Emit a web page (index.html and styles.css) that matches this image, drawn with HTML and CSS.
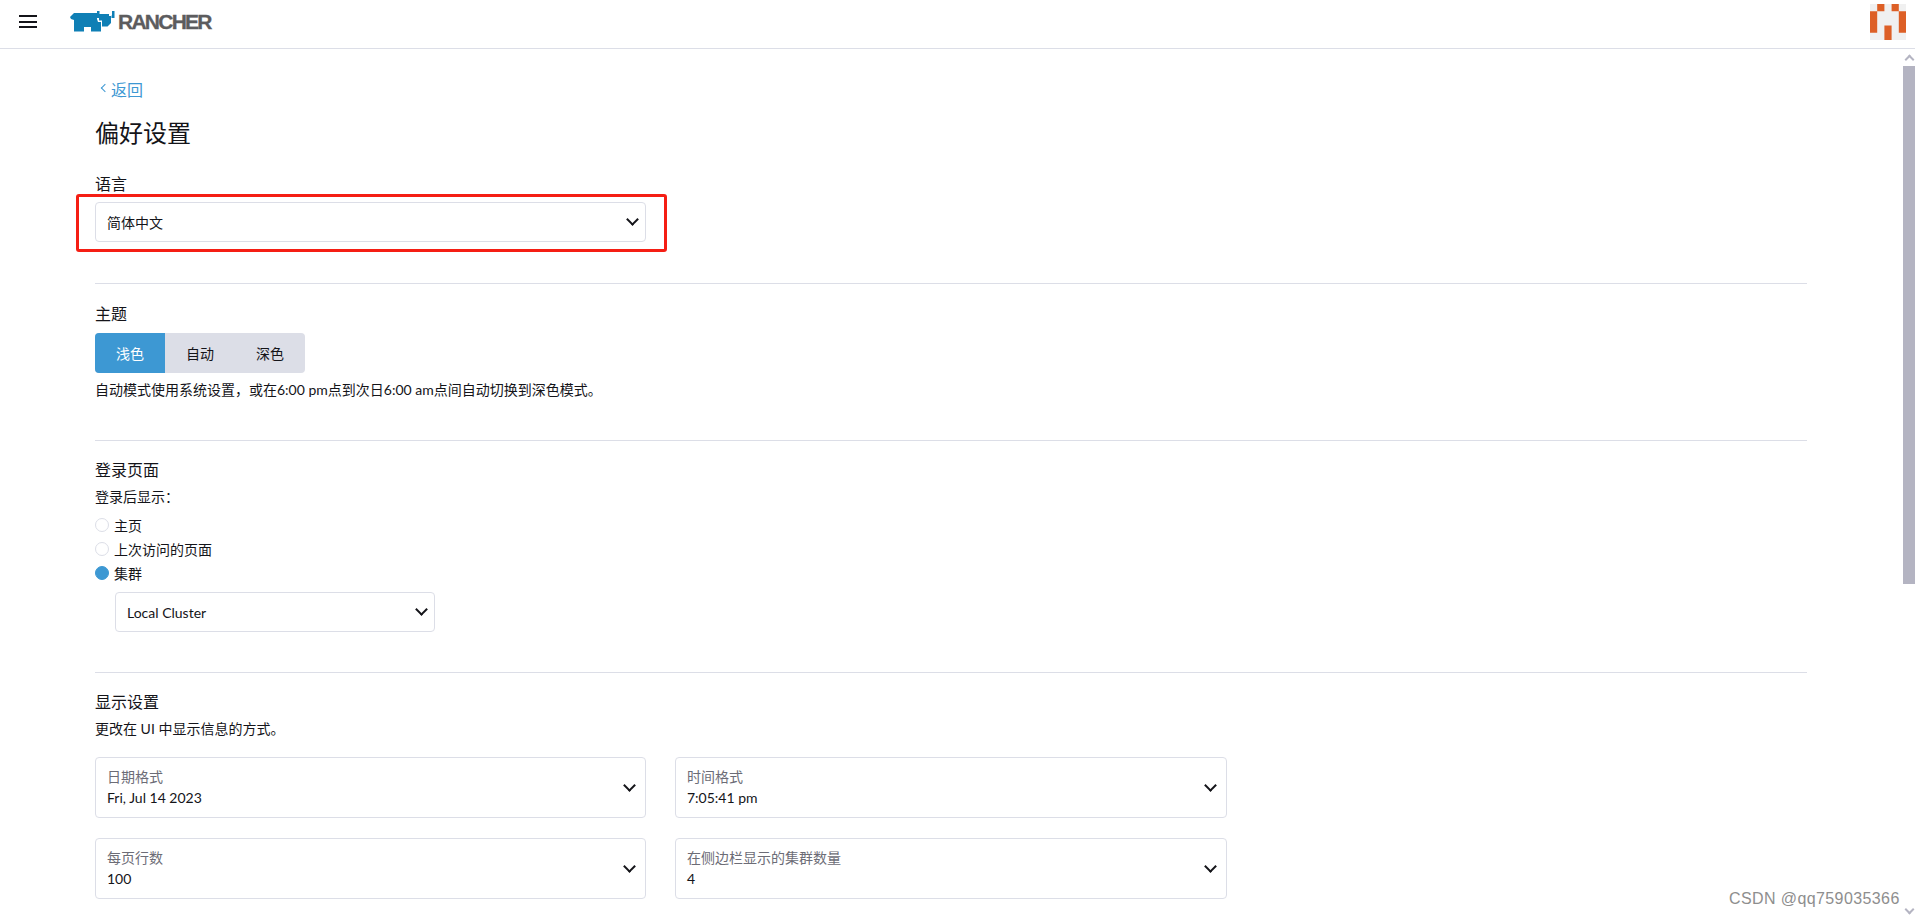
FILE: index.html
```html
<!DOCTYPE html>
<html lang="zh-CN">
<head>
  <meta charset="UTF-8" />
  <title>偏好设置 - Rancher</title>
  <link rel="stylesheet" href="styles.css">
</head>
<body>
  <header class="topbar">
    <button class="menu-btn" aria-label="menu"><span></span><span></span><span></span></button>
    <div class="logo">
      <svg class="logo-bull" viewBox="0 0 45 21" width="45" height="21">
        <path fill="#0f7fb5" d="M0 6 L4 2 H27 V8 L28 11 H31 V20.5 H21 V16 H14 V20.5 H4 V9 L1 8 Z"/>
        <path fill="#0f7fb5" d="M27 0 H29.5 V3 H39 V5 H41 V12 L37.5 15.5 H32 V9.5 H29 V7 H27 Z"/>
        <path fill="#0f7fb5" d="M42 0 H44.5 V7 H41.5 V4.5 H42 Z"/>
      </svg>
      <span class="logo-text">RANCHER</span>
    </div>
    <svg class="avatar" viewBox="0 0 5 5" width="36" height="36">
      <rect width="5" height="5" fill="#f0f0f0"/>
      <path fill="#dd5f26" d="M1 0h1v1H1zM3 0h1v1H3zM0 1h1v3H0zM4 1h1v3H4zM2 3h1v2H2z"/>
    </svg>
  </header>

  <div class="page">
    <main class="content">
      <a class="back" href="#"><i class="back-arrow"></i>返回</a>
      <h1>偏好设置</h1>

      <section class="group first">
        <h4>语言</h4>
        <div class="select-wrap">
          <div class="select plain half"><span>简体中文</span><i class="chevron"></i></div>
        </div>
      </section>

      <section class="group">
        <h4>主题</h4>
        <div class="btn-group">
          <button class="active">浅色</button>
          <button>自动</button>
          <button>深色</button>
        </div>
        <p class="hint theme-hint">自动模式使用系统设置，或在6:00 pm点到次日6:00 am点间自动切换到深色模式。</p>
      </section>

      <section class="group login">
        <h4>登录页面</h4>
        <p class="hint">登录后显示：</p>
        <ul class="radios">
          <li><i class="radio"></i>主页</li>
          <li><i class="radio"></i>上次访问的页面</li>
          <li><i class="radio on"></i>集群</li>
        </ul>
        <div class="select plain cluster"><span>Local Cluster</span><i class="chevron"></i></div>
      </section>

      <section class="group display">
        <h4>显示设置</h4>
        <p class="hint">更改在 UI 中显示信息的方式。</p>
        <div class="grid">
          <div class="select labeled"><div><label>日期格式</label><span>Fri, Jul 14 2023</span></div><i class="chevron"></i></div>
          <div class="select labeled"><div><label>时间格式</label><span>7:05:41 pm</span></div><i class="chevron"></i></div>
          <div class="select labeled"><div><label>每页行数</label><span>100</span></div><i class="chevron"></i></div>
          <div class="select labeled"><div><label>在侧边栏显示的集群数量</label><span>4</span></div><i class="chevron"></i></div>
        </div>
      </section>
    </main>

    <div class="scrollbar">
      <i class="scroll-arrow up"></i>
      <div class="scroll-thumb"></div>
      <i class="scroll-arrow down"></i>
    </div>
  </div>

  <div class="watermark">CSDN @qq759035366</div>
</body>
</html>
```

FILE: styles.css
```css
* {
  box-sizing: border-box;
}

html, body {
  margin: 0;
  height: 916px;
  overflow: hidden;
}

body {
  font-family: Lato, "Noto Sans CJK SC", sans-serif;
  font-size: 14px;
  color: #141419;
  background: #fff;
  display: flex;
  flex-direction: column;
}

.topbar {
  height: 49px;
  flex: none;
  display: flex;
  align-items: flex-start;
  border-bottom: 1px solid #dcdee7;
  padding-left: 19px;
  padding-right: 9px;
}

.menu-btn {
  width: 18px;
  margin-top: 15px;
  padding: 0;
  border: none;
  background: none;
  display: flex;
  flex-direction: column;
  gap: 3.5px;
}

.menu-btn span {
  display: block;
  height: 2px;
  background: #141419;
}

.logo {
  display: flex;
  align-items: flex-start;
  margin-left: 33px;
  margin-top: 11px;
}

.logo-text {
  font-family: "Liberation Sans", sans-serif;
  font-weight: bold;
  font-size: 21px;
  line-height: 20px;
  letter-spacing: -1.75px;
  -webkit-text-stroke: 0.3px #5c5c5e;
  color: #5c5c5e;
  margin-left: 3px;
  margin-top: 1px;
}

.avatar {
  margin-left: auto;
  margin-top: 4px;
}

.page {
  flex: 1;
  display: flex;
  min-height: 0;
}

.content {
  flex: 1;
  padding: 0 96px 0 95px;
  overflow: hidden;
}

.back {
  display: block;
  margin-top: 29px;
  font-size: 16px;
  line-height: 24px;
  color: #3d98d3;
  text-decoration: none;
  padding-left: 7px;
}

.back-arrow {
  display: inline-block;
  width: 6px;
  height: 6px;
  border-left: 1.5px solid #3d98d3;
  border-bottom: 1.5px solid #3d98d3;
  transform: rotate(45deg);
  margin-right: 3px;
  vertical-align: 5px;
}

h1 {
  font-size: 24px;
  font-weight: 400;
  line-height: 32px;
  margin: 15px 0 0;
}

h4 {
  font-size: 16px;
  font-weight: 400;
  line-height: 20px;
  margin: 0;
}

.group {
  border-top: 1px solid #dcdee7;
  padding-top: 20px;
  margin-top: 40px;
}

.group.first {
  border-top: none;
  padding-top: 0;
  margin-top: 25px;
}

.select-wrap {
  position: relative;
  margin-top: 8px;
  margin-bottom: 41px;
}

.select-wrap::before {
  content: "";
  box-sizing: border-box;
  position: absolute;
  left: -19px;
  top: -8px;
  width: 591px;
  height: 58px;
  border: 3px solid #f51e14;
  border-radius: 3px;
}

.select {
  display: flex;
  align-items: center;
  justify-content: space-between;
  border: 1px solid #dcdee7;
  border-radius: 4px;
  background: #fff;
}

.select.plain {
  height: 40px;
  padding: 0 6px 0 11px;
}

.half {
  width: 551px;
}

.chevron {
  width: 9px;
  height: 9px;
  border-right: 2px solid #141419;
  border-bottom: 2px solid #141419;
  transform: rotate(45deg);
  margin: -5px 2px 0 0;
  flex: none;
}

.btn-group {
  display: flex;
  width: 210px;
  height: 40px;
  margin-top: 9px;
  border-radius: 4px;
  overflow: hidden;
  background: #dcdee7;
}

.btn-group button {
  width: 70px;
  border: none;
  padding: 0;
  background: none;
  font: inherit;
  color: #141419;
}

.btn-group button.active {
  background: #3d98d3;
  color: #fff;
}

.hint {
  margin: 0;
  line-height: 21px;
}

.theme-hint {
  margin-top: 6px;
}

.login {
  padding-top: 19px;
}

.login .hint {
  margin-top: 6px;
}

.radios {
  list-style: none;
  margin: 6px 0 0;
  padding: 0;
}

.radios li {
  display: flex;
  align-items: center;
  height: 24px;
}

.radio {
  width: 14px;
  height: 14px;
  margin-right: 5px;
  border: 1px solid #dcdee7;
  border-radius: 50%;
}

.radio.on {
  background: #3d98d3;
  border-color: #3d98d3;
}

.cluster {
  width: 320px;
  margin: 7px 0 0 20px;
}

.display {
  padding-top: 19px;
}

.display .hint {
  margin-top: 6px;
}

.grid {
  display: grid;
  grid-template-columns: 551px 552px;
  gap: 20px 29px;
  margin-top: 18px;
}

.select.labeled {
  height: 61px;
  padding: 0 9px 0 11px;
}

.labeled label {
  display: block;
  color: #6c6c76;
  line-height: 20px;
}

.labeled span {
  display: block;
  line-height: 20px;
  margin-top: 1px;
}

.scrollbar {
  width: 12px;
  flex: none;
  display: flex;
  flex-direction: column;
  align-items: center;
}

.scroll-arrow {
  width: 7px;
  height: 7px;
  border-left: 2px solid #b4b4c2;
  border-top: 2px solid #b4b4c2;
  transform: rotate(45deg);
  flex: none;
}

.scroll-arrow.up {
  margin-top: 7px;
}

.scroll-arrow.down {
  transform: rotate(225deg);
  margin-top: auto;
  margin-bottom: 3px;
}

.scroll-thumb {
  width: 12px;
  height: 518px;
  margin-top: 3px;
  background: #b4b4c2;
}

.watermark {
  position: absolute;
  left: 1729px;
  top: 889px;
  font-family: "Liberation Sans", sans-serif;
  font-size: 16px;
  line-height: 20px;
  letter-spacing: 0.4px;
  color: #8e8e8e;
}
```
